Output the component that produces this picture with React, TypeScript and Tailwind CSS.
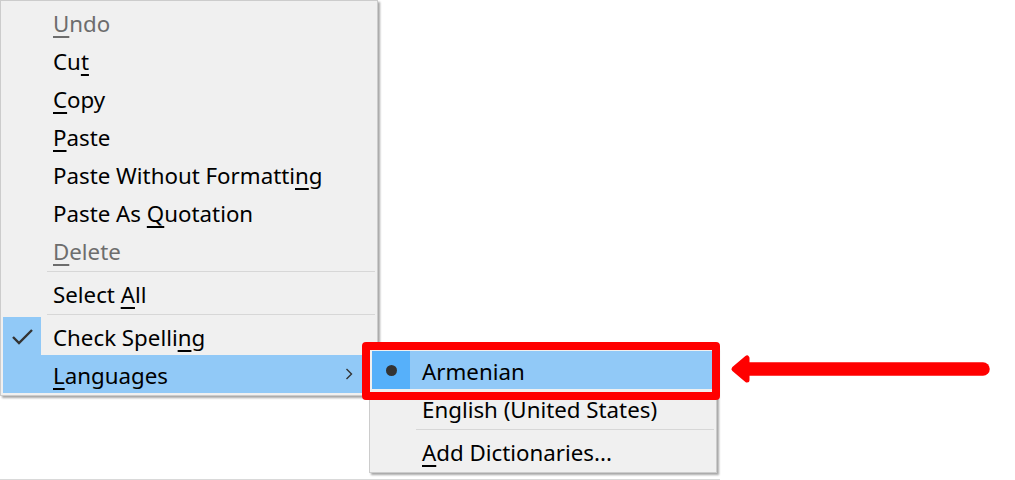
import React from "react";

const FONT = { fontFamily: '"Noto Sans", "Open Sans", sans-serif' };

function Row({
  children,
  disabled = false,
  highlight = false,
  gutterHighlight = false,
  gutter,
  chevron = false,
  dark = false,
}: {
  children: React.ReactNode;
  disabled?: boolean;
  highlight?: boolean;
  gutterHighlight?: boolean;
  gutter?: React.ReactNode;
  chevron?: boolean;
  dark?: boolean;
}) {
  return (
    <div className={`flex h-[38px] items-center ${highlight ? "bg-[#91c9f7]" : ""}`}>
      <div
        className={`flex h-full w-[38px] shrink-0 items-center justify-center ${
          dark ? "bg-[#56b0fa]" : gutterHighlight ? "bg-[#91c9f7]" : ""
        }`}
      >
        {gutter}
      </div>
      <div
        className={`flex-1 pl-[12px] pt-[4px] text-[22.3px] leading-none ${
          disabled ? "text-[#6d6d6d]" : "text-black"
        }`}
      >
        {children}
      </div>
      {chevron && (
        <svg width="8" height="12" viewBox="0 0 8 12" className="mr-[22px]">
          <polyline points="1.5,1 6.5,6 1.5,11" fill="none" stroke="#333" strokeWidth="1.4" />
        </svg>
      )}
    </div>
  );
}

function Sep() {
  return (
    <div className="flex h-[5px] items-center pl-[44px]">
      <div className="h-px w-full bg-[#d7d7d7]" />
    </div>
  );
}

function U({ children }: { children: React.ReactNode }) {
  return <span className="underline decoration-[1.5px] underline-offset-[4px]">{children}</span>;
}

export default function App() {
  return (
    <div className="relative h-[480px] w-[1015px] overflow-hidden bg-white" style={FONT}>
      {/* bottom line */}
      <div className="absolute bottom-0 left-0 h-px w-[720px] bg-[#d9d9d9]" />

      {/* main menu */}
      <div className="absolute left-0 top-0 w-[378px] border border-[#cccccc] bg-[#f0f0f0] p-[2px] shadow-[2px_2px_2px_rgba(0,0,0,0.35)]">
        <Row disabled>
          <U>U</U>ndo
        </Row>
        <Row>
          Cu<U>t</U>
        </Row>
        <Row>
          <U>C</U>opy
        </Row>
        <Row>
          <U>P</U>aste
        </Row>
        <Row>
          Paste Without Formatti<U>n</U>g
        </Row>
        <Row>
          Paste As <U>Q</U>uotation
        </Row>
        <Row disabled>
          <U>D</U>elete
        </Row>
        <Sep />
        <Row>
          Select <U>A</U>ll
        </Row>
        <Sep />
        <Row
          gutterHighlight
          gutter={
            <svg width="38" height="38" viewBox="0 0 38 38">
              <polyline points="10,20 16,26 29,13" fill="none" stroke="#333" strokeWidth="2.4" />
            </svg>
          }
        >
          Check Spelli<U>n</U>g
        </Row>
        <Row highlight gutterHighlight chevron>
          <U>L</U>anguages
        </Row>
      </div>

      {/* submenu */}
      <div className="absolute left-[369px] top-[348px] w-[348px] border border-[#cccccc] bg-[#f0f0f0] p-[2px] shadow-[2px_2px_2px_rgba(0,0,0,0.35)]">
        <Row highlight dark gutter={<div className="h-[11px] w-[11px] rounded-full bg-[#333]" />}>
          Armenian
        </Row>
        <Row>English (United States)</Row>
        <Sep />
        <Row>
          <U>A</U>dd Dictionaries...
        </Row>
      </div>

      {/* red highlight box */}
      <div className="absolute left-[362px] top-[342px] h-[58px] w-[358px] rounded-[4px] border-[8px] border-[#ff0000]" />

      {/* arrow */}
      <svg className="absolute left-[720px] top-[345px]" width="290" height="50" viewBox="720 345 290 50">
        <line x1="746" y1="369" x2="983" y2="369" stroke="#ff0000" strokeWidth="13.5" strokeLinecap="round" />
        <polygon
          points="734,369 747,358 747,380"
          fill="#ff0000"
          stroke="#ff0000"
          strokeWidth="5"
          strokeLinejoin="round"
        />
      </svg>
    </div>
  );
}
